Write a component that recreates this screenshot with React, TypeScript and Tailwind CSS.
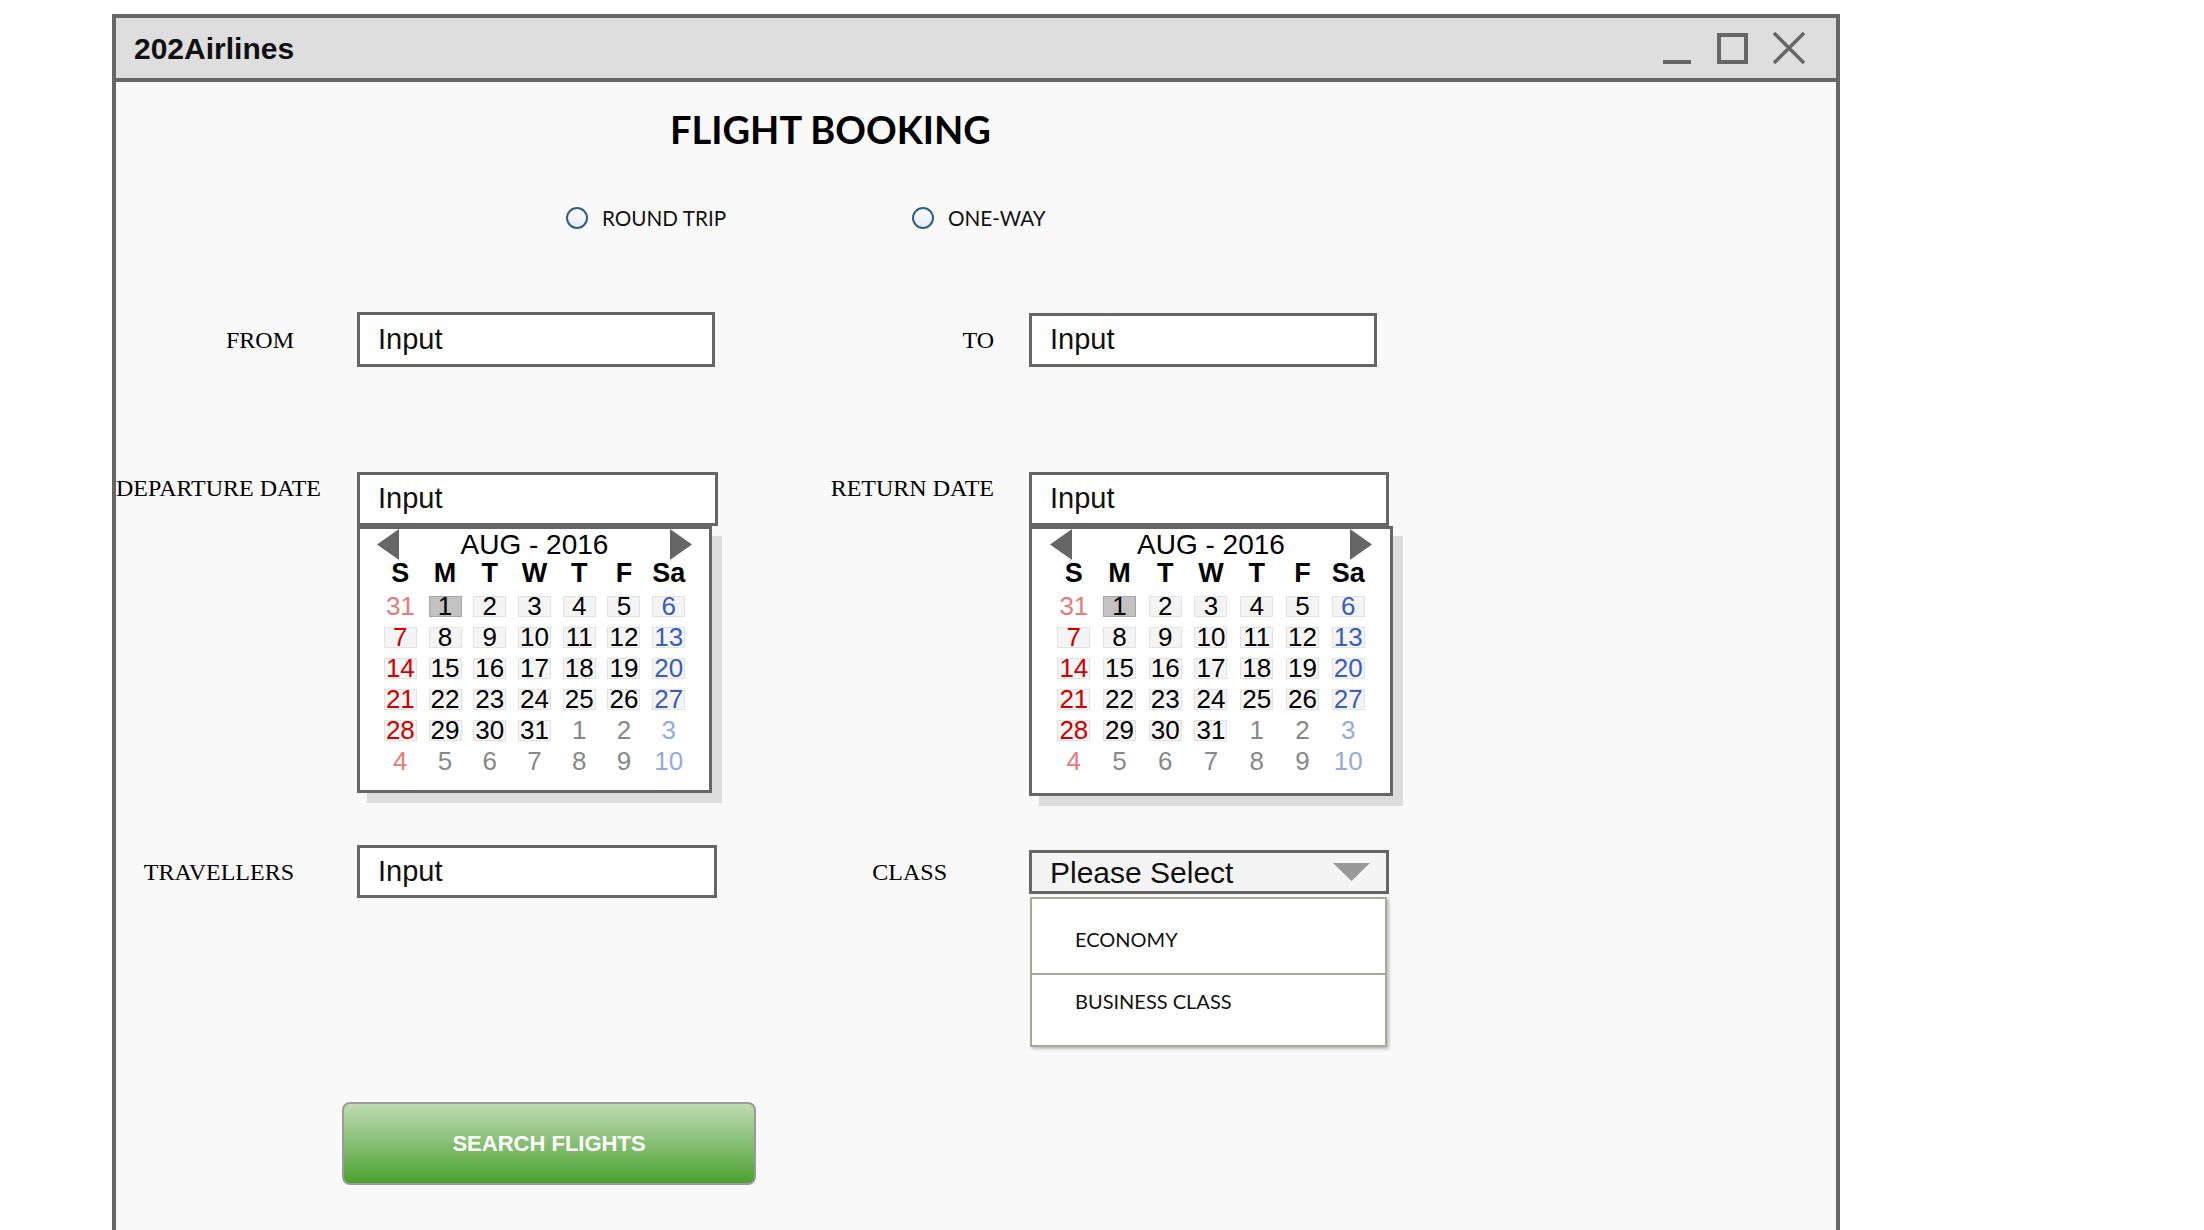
import clsx from "clsx";

type Day = { n: number; kind: "prev" | "cur" | "next" };

function buildWeeks(): Day[][] {
  const days: Day[] = [{ n: 31, kind: "prev" }];
  for (let i = 1; i <= 31; i++) days.push({ n: i, kind: "cur" });
  for (let i = 1; i <= 10; i++) days.push({ n: i, kind: "next" });
  const weeks: Day[][] = [];
  for (let w = 0; w < 6; w++) weeks.push(days.slice(w * 7, w * 7 + 7));
  return weeks;
}

const weeks = buildWeeks();
const dayNames = ["S", "M", "T", "W", "T", "F", "Sa"];

function dayColor(d: Day, col: number) {
  if (col === 0) return d.kind === "cur" ? "text-[#cc0000]" : "text-[#e57b7b]";
  if (col === 6) return d.kind === "cur" ? "text-[#3a5db5]" : "text-[#97aadb]";
  return d.kind === "cur" ? "text-black" : "text-[#888]";
}

function Arrow({ dir }: { dir: "left" | "right" }) {
  return (
    <svg width="22" height="31" viewBox="0 0 22 31">
      <polygon points={dir === "left" ? "22,0 0,15.5 22,31" : "0,0 22,15.5 0,31"} fill="#666" />
    </svg>
  );
}

function Calendar({ box, grid, pad }: { box: string; grid: string; pad: string }) {
  return (
    <div
      className={clsx(
        "flex flex-col border-[3px] border-[#666] bg-white font-['Liberation_Sans',Arial,sans-serif] shadow-[10px_10px_0_0_#dcdcdc]",
        box
      )}
    >
      <div className={clsx("flex h-[31px] items-center justify-between", pad)}>
        <Arrow dir="left" />
        <span className="text-[28px] leading-[31px] text-black">AUG - 2016</span>
        <Arrow dir="right" />
      </div>
      <div className={clsx("mx-auto grid h-[26px] grid-cols-7 items-center", grid)}>
        {dayNames.map((d, i) => (
          <div key={i} className="text-center text-[27px] font-bold leading-[26px] text-black">
            {d}
          </div>
        ))}
      </div>
      <div className={clsx("mx-auto mt-[5px] flex flex-col", grid)}>
        {weeks.map((week, r) => (
          <div key={r} className="grid h-[31px] grid-cols-7 items-center">
            {week.map((d, c) => (
              <div key={c} className="flex justify-center">
                <div
                  className={clsx(
                    "flex h-[21px] w-[33px] items-center justify-center border text-[26px] leading-[21px]",
                    d.kind !== "cur" && "border-transparent",
                    d.kind === "cur" && d.n === 1 && "border-[#a6a6a6] bg-[#c2c2c2]",
                    d.kind === "cur" && d.n !== 1 && "border-[#e2e2e2] bg-[#f4f4f4]",
                    dayColor(d, c)
                  )}
                >
                  {d.n}
                </div>
              </div>
            ))}
          </div>
        ))}
      </div>
    </div>
  );
}

function TextInput({ className }: { className: string }) {
  return (
    <div
      className={clsx(
        "flex shrink-0 items-center border-[3px] border-[#666] bg-white pl-[18px] font-['Liberation_Sans',Arial,sans-serif] text-[29px] text-[#111]",
        className
      )}
    >
      Input
    </div>
  );
}

function Label({ children, className }: { children: React.ReactNode; className: string }) {
  return (
    <div
      className={clsx(
        "shrink-0 whitespace-nowrap text-right font-['Liberation_Serif','Times_New_Roman',serif] text-[24px] leading-[26px] text-black",
        className
      )}
    >
      {children}
    </div>
  );
}

function Radio({ label, className }: { label: string; className?: string }) {
  return (
    <div className={clsx("flex items-center gap-[14px]", className)}>
      <span className="h-[22px] w-[22px] rounded-full border-[2.5px] border-[#2f5f89] bg-gradient-to-b from-white to-[#e3ebf2]" />
      <span className="origin-left scale-x-[0.94] font-['Lato',sans-serif] text-[22px] leading-[24px] text-[#111]">
        {label}
      </span>
    </div>
  );
}

export default function App() {
  return (
    <div className="h-[1230px] w-full overflow-hidden bg-white">
      <div className="ml-[112px] mt-[14px] flex h-[1216px] w-[1728px] flex-col border-4 border-b-0 border-[#666] bg-[#f9f9f9]">
        {/* title bar */}
        <div className="flex h-[64px] shrink-0 items-center justify-between border-b-4 border-[#666] bg-[#dedede] pl-[18px] pr-[30px]">
          <span className="font-['Liberation_Sans',Arial,sans-serif] text-[30px] font-bold text-[#111]">202Airlines</span>
          <div className="flex items-center">
            <svg width="28" height="34" viewBox="0 0 28 34">
              <rect x="0" y="29" width="28" height="4" fill="#666" />
            </svg>
            <svg className="ml-[26px]" width="31" height="31" viewBox="0 0 31 31">
              <rect x="2" y="2" width="27" height="27" fill="none" stroke="#666" strokeWidth="4" />
            </svg>
            <svg className="ml-[24px]" width="34" height="34" viewBox="0 0 34 34">
              <path d="M2 2 L32 32 M32 2 L2 32" stroke="#666" strokeWidth="3.5" />
            </svg>
          </div>
        </div>

        {/* body */}
        <div className="flex flex-col">
          <h1 className="mt-[25px] pl-[554px] font-['Lato',sans-serif] text-[38px] font-bold leading-[44px] text-black">
            FLIGHT BOOKING
          </h1>

          <div className="mt-[55px] flex h-[24px] items-center pl-[450px]">
            <Radio label="ROUND TRIP" className="w-[346px]" />
            <Radio label="ONE-WAY" />
          </div>

          <div className="mt-[82px] flex items-center">
            <Label className="w-[241px] pr-[63px]">FROM</Label>
            <TextInput className="h-[55px] w-[358px]" />
            <Label className="w-[314px] pr-[35px]">TO</Label>
            <TextInput className="h-[54px] w-[348px]" />
          </div>

          <div className="mt-[105px] flex items-start">
            <Label className="mt-[3px] w-[241px] pr-[37px]">DEPARTURE DATE</Label>
            <div className="flex flex-col">
              <TextInput className="h-[54px] w-[361px]" />
              <Calendar box="h-[267px] w-[355px]" grid="w-[313px]" pad="px-[17px]" />
            </div>
            <Label className="mt-[3px] w-[311px] pr-[35px]">RETURN DATE</Label>
            <div className="flex flex-col">
              <TextInput className="h-[54px] w-[360px]" />
              <Calendar box="h-[270px] w-[364px]" grid="w-[320px]" pad="px-[18px]" />
            </div>
          </div>

          <div className="mt-[49px] flex items-center">
            <Label className="w-[241px] pr-[63px]">TRAVELLERS</Label>
            <TextInput className="h-[53px] w-[360px]" />
            <Label className="w-[312px] pr-[82px]">CLASS</Label>
            <div className="relative h-[44px] w-[360px]">
              <div className="flex h-full items-center justify-between border-[3px] border-[#666] bg-[#f4f4f4] pl-[18px] pr-[16px] font-['Liberation_Sans',Arial,sans-serif] text-[30px] text-[#111]">
                <span className="mt-[2px]">Please Select</span>
                <svg width="37" height="18" viewBox="0 0 37 18">
                  <polygon points="0,0 37,0 18.5,18" fill="#999" />
                </svg>
              </div>
              <div className="absolute left-[1px] top-[47px] flex h-[150px] w-[357px] flex-col border-2 border-[#a9a797] bg-white shadow-[2px_2px_3px_rgba(0,0,0,0.25)] font-['Lato',sans-serif] text-[20px] leading-[26px] text-[#111]">
                <div className="h-[76px] border-b-2 border-[#a9a797] pl-[43px] pt-[27px]">ECONOMY</div>
                <div className="pl-[43px] pt-[13px]">BUSINESS CLASS</div>
              </div>
            </div>
          </div>

          <div className="mt-[204px] pl-[226px]">
            <button className="flex h-[83px] w-[414px] items-center justify-center rounded-[8px] border-2 border-[#9a9a9a] bg-gradient-to-b from-[#bedbb1] to-[#48a12a] font-['Liberation_Sans',Arial,sans-serif] text-[22px] font-bold text-white">
              SEARCH FLIGHTS
            </button>
          </div>
        </div>
      </div>
    </div>
  );
}
